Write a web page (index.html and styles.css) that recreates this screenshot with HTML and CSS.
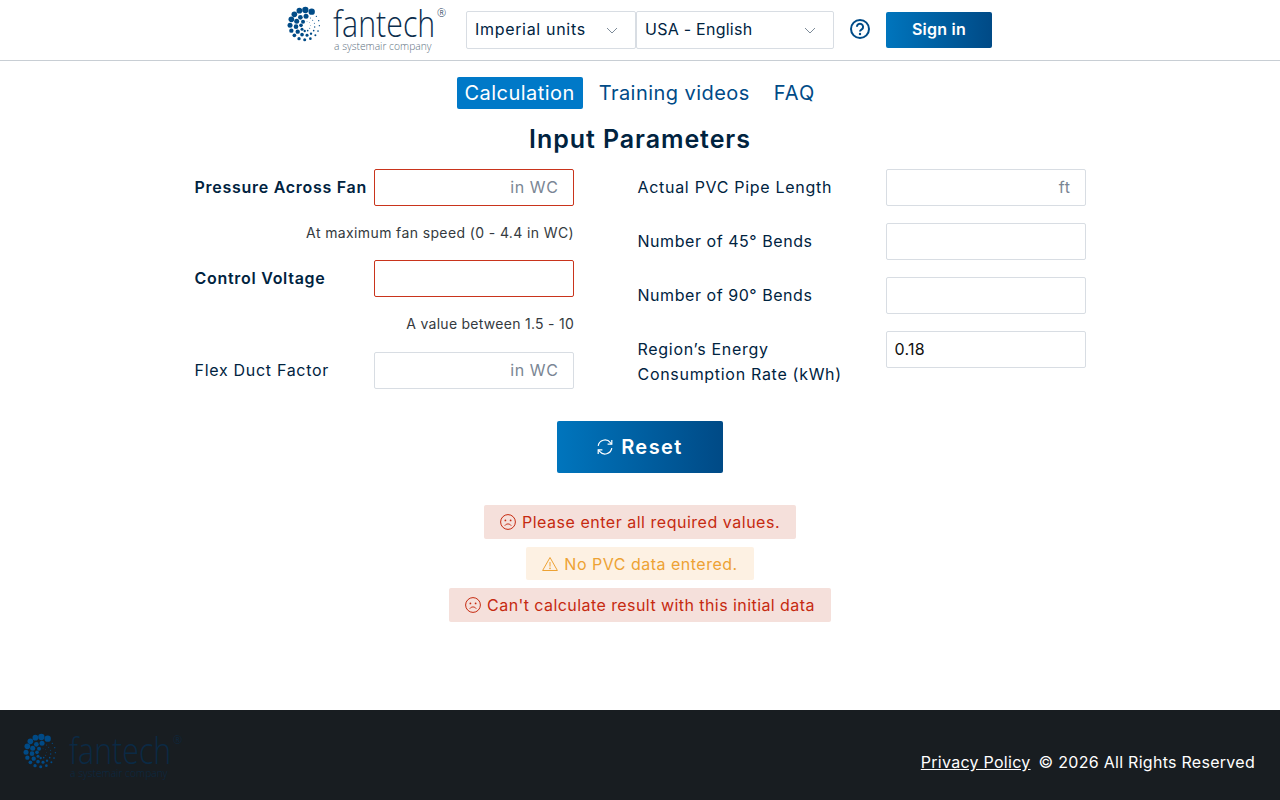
FILE: index.html
```html
<!DOCTYPE html>
<html lang="en">
<head>
<meta charset="utf-8">
<title>Fantech</title>
<link rel="stylesheet" href="styles.css">
</head>
<body>
<header class="topbar">
  <svg class="logo" width="158" height="46" viewBox="0 0 158 46">
    <g class="logo-dots" transform="translate(-24.3 -24) scale(.3333)">
      <circle cx="125" cy="81" r="9.5"/><circle cx="144" cy="86" r="9.5"/><circle cx="107" cy="83" r="8.5"/><circle cx="92" cy="94" r="8.5"/><circle cx="83" cy="109" r="8.5"/><circle cx="79" cy="127" r="7.5"/><circle cx="83" cy="143" r="6.5"/><circle cx="92" cy="157" r="5.5"/><circle cx="106" cy="167" r="5"/><circle cx="123" cy="170" r="4.5"/><circle cx="140" cy="167" r="4"/><circle cx="155" cy="157" r="3"/><circle cx="163" cy="144" r="2.5"/><circle cx="167" cy="128" r="2"/><circle cx="165" cy="113" r="2"/><circle cx="158" cy="100" r="2"/>
      <circle cx="127" cy="100" r="7.5"/><circle cx="110" cy="103" r="7"/><circle cx="99" cy="115" r="7.5"/><circle cx="97" cy="131" r="7"/><circle cx="102" cy="146" r="6.5"/><circle cx="115" cy="155" r="5.5"/><circle cx="130" cy="157" r="4.5"/><circle cx="142" cy="152" r="3.5"/><circle cx="150" cy="143" r="2.5"/><circle cx="153" cy="132" r="2"/><circle cx="152" cy="121" r="1.5"/><circle cx="147" cy="112" r="1.5"/><circle cx="140" cy="105" r="1.5"/>
      <circle cx="118" cy="116" r="6"/><circle cx="112" cy="127" r="5.5"/><circle cx="115" cy="139" r="4.5"/><circle cx="123" cy="144" r="3.5"/><circle cx="132" cy="143" r="2.5"/><circle cx="138" cy="136" r="1.5"/><circle cx="140" cy="127" r="1.2"/><circle cx="137" cy="119" r="1.2"/><circle cx="130" cy="115" r="1.2"/>
    </g>
    <text class="logo-name" transform="translate(45 30) scale(.82 1)">fantech</text>
    <text class="logo-reg" x="149" y="10">®</text>
    <text class="logo-sub" x="46" y="43">a systemair company</text>
  </svg>
  <div class="select select-units">
    <span>Imperial units</span>
    <svg class="chev" width="12" height="7" viewBox="0 0 12 7"><path d="M1 1l5 5 5-5"/></svg>
  </div>
  <div class="select select-region">
    <span>USA - English</span>
    <svg class="chev" width="12" height="7" viewBox="0 0 12 7"><path d="M1 1l5 5 5-5"/></svg>
  </div>
  <svg class="help" width="20" height="20" viewBox="0 0 20 20">
    <circle cx="10" cy="10" r="9"/>
    <path d="M6.9 7.8a3.1 3.1 0 1 1 4.8 2.6c-1.2.7-1.7 1.1-1.7 2.1"/>
    <circle class="help-dot" cx="10" cy="15" r="1.2"/>
  </svg>
  <a class="btn btn-signin" href="#">Sign in</a>
</header>

<main class="content">
  <nav class="tabs">
    <a class="tab tab-active" href="#">Calculation</a>
    <a class="tab" href="#">Training videos</a>
    <a class="tab tab-faq" href="#">FAQ</a>
  </nav>
  <h1 class="title">Input Parameters</h1>

  <form class="form">
    <div class="col col-left">
      <div class="row">
        <label class="label label-strong">Pressure Across Fan</label>
        <input class="input input-error" placeholder="in WC">
      </div>
      <p class="hint hint-long">At maximum fan speed (0 - 4.4 in WC)</p>
      <div class="row">
        <label class="label label-strong">Control Voltage</label>
        <input class="input input-error">
      </div>
      <p class="hint">A value between 1.5 - 10</p>
      <div class="row">
        <label class="label">Flex Duct Factor</label>
        <input class="input" placeholder="in WC">
      </div>
    </div>
    <div class="col col-right">
      <div class="row">
        <label class="label">Actual PVC Pipe Length</label>
        <input class="input" placeholder="ft">
      </div>
      <div class="row">
        <label class="label label-num">Number of 45° Bends</label>
        <input class="input">
      </div>
      <div class="row">
        <label class="label label-num">Number of 90° Bends</label>
        <input class="input">
      </div>
      <div class="row row-top">
        <label class="label label-wrap">Region’s Energy Consumption Rate (kWh)</label>
        <input class="input" value="0.18">
      </div>
    </div>
  </form>

  <a class="btn btn-reset" href="#">
    <svg class="reset-icon" width="16" height="16" viewBox="0 0 16 16">
      <path d="M1.2 6.8A6.9 6.9 0 0 1 13.4 3.6L14.6 5"/><path d="M14.8 1v4.2h-4.2"/>
      <path d="M14.8 9.2A6.9 6.9 0 0 1 2.6 12.4L1.4 11"/><path d="M1.2 15v-4.2h4.2"/>
    </svg>
    <span>Reset</span>
  </a>

  <div class="alerts">
    <div class="alert alert-error">
      <svg class="alert-icon" width="16" height="16" viewBox="0 0 16 16"><circle cx="8" cy="8" r="7.4"/><path d="M4.8 11.6c1.6-2.2 4.8-2.2 6.4 0"/><circle class="eye" cx="5.4" cy="6.4" r=".9"/><circle class="eye" cx="10.6" cy="6.4" r=".9"/></svg>
      <span>Please enter all required values.</span>
    </div>
    <div class="alert alert-warn">
      <svg class="alert-icon" width="16" height="16" viewBox="0 0 16 16"><path d="M8 1.5l7.4 13H.6z"/><path d="M8 6v4.6"/><circle class="eye" cx="8" cy="12.4" r=".8"/></svg>
      <span>No PVC data entered.</span>
    </div>
    <div class="alert alert-error alert-long">
      <svg class="alert-icon" width="16" height="16" viewBox="0 0 16 16"><circle cx="8" cy="8" r="7.4"/><path d="M4.8 11.6c1.6-2.2 4.8-2.2 6.4 0"/><circle class="eye" cx="5.4" cy="6.4" r=".9"/><circle class="eye" cx="10.6" cy="6.4" r=".9"/></svg>
      <span>Can't calculate result with this initial data</span>
    </div>
  </div>
</main>

<footer class="footer">
  <svg class="logo logo-dim" width="158" height="46" viewBox="0 0 158 46">
    <g class="logo-dots" transform="translate(-24.3 -24) scale(.3333)">
      <circle cx="125" cy="81" r="9.5"/><circle cx="144" cy="86" r="9.5"/><circle cx="107" cy="83" r="8.5"/><circle cx="92" cy="94" r="8.5"/><circle cx="83" cy="109" r="8.5"/><circle cx="79" cy="127" r="7.5"/><circle cx="83" cy="143" r="6.5"/><circle cx="92" cy="157" r="5.5"/><circle cx="106" cy="167" r="5"/><circle cx="123" cy="170" r="4.5"/><circle cx="140" cy="167" r="4"/><circle cx="155" cy="157" r="3"/><circle cx="163" cy="144" r="2.5"/><circle cx="167" cy="128" r="2"/><circle cx="165" cy="113" r="2"/><circle cx="158" cy="100" r="2"/>
      <circle cx="127" cy="100" r="7.5"/><circle cx="110" cy="103" r="7"/><circle cx="99" cy="115" r="7.5"/><circle cx="97" cy="131" r="7"/><circle cx="102" cy="146" r="6.5"/><circle cx="115" cy="155" r="5.5"/><circle cx="130" cy="157" r="4.5"/><circle cx="142" cy="152" r="3.5"/><circle cx="150" cy="143" r="2.5"/><circle cx="153" cy="132" r="2"/><circle cx="152" cy="121" r="1.5"/><circle cx="147" cy="112" r="1.5"/><circle cx="140" cy="105" r="1.5"/>
      <circle cx="118" cy="116" r="6"/><circle cx="112" cy="127" r="5.5"/><circle cx="115" cy="139" r="4.5"/><circle cx="123" cy="144" r="3.5"/><circle cx="132" cy="143" r="2.5"/><circle cx="138" cy="136" r="1.5"/><circle cx="140" cy="127" r="1.2"/><circle cx="137" cy="119" r="1.2"/><circle cx="130" cy="115" r="1.2"/>
    </g>
    <text class="logo-name" transform="translate(45 30) scale(.82 1)">fantech</text>
    <text class="logo-reg" x="149" y="10">®</text>
    <text class="logo-sub" x="46" y="43">a systemair company</text>
  </svg>
  <p class="legal"><a href="#">Privacy Policy</a><span>© 2026 All Rights Reserved</span></p>
</footer>
</body>
</html>
```
FILE: styles.css
```css
* { box-sizing: border-box; }
body {
  margin: 0;
  height: 800px;
  display: flex;
  flex-direction: column;
  overflow: hidden;
  background: #fff;
  color: #00233f;
  font-family: Inter, "Open Sans", "Liberation Sans", sans-serif;
  font-size: 16px;
  letter-spacing: .25px;
}
a { text-decoration: none; }

/* logo */
.logo { display: block; flex: none; overflow: visible; --sub: #5c6f80; --name: #0b2d4c; --dots: #004b87; }
.logo-dim { --sub: #0b2a45; --name: #0b2a45; --dots: #004a86; }
.logo-dots { fill: var(--dots); }
.logo-name { font: 300 37px "Open Sans", sans-serif; letter-spacing: 0; fill: var(--name); }
.logo-reg { font: 300 11px "Open Sans", sans-serif; letter-spacing: 0; fill: var(--name); }
.logo-sub { font: 300 10.3px "Open Sans", sans-serif; letter-spacing: 0; fill: var(--sub); }

/* header */
.topbar {
  flex: none;
  height: 61px;
  border-bottom: 1px solid #c8ced4;
  display: flex;
  align-items: center;
  justify-content: center;
}
.topbar .logo { margin-right: 20px; }
.select {
  height: 38px;
  border: 1px solid #d8dde3;
  border-radius: 2px;
  display: flex;
  align-items: center;
  justify-content: space-between;
  padding: 0 17px 2px 8px;
  color: #00233f;
}
.select-units { width: 170px; letter-spacing: .68px; }
.select-region { width: 198px; }
.chev { margin-top: 3px; }
.chev path { fill: none; stroke: #7d8b99; stroke-width: 1; }
.help { margin: 0 16px 2px; flex: none; }
.help circle { fill: none; stroke: #004b87; stroke-width: 2; }
.help path { fill: none; stroke: #004b87; stroke-width: 2; }
.help .help-dot { fill: #004b87; stroke: none; }
.btn {
  display: flex;
  align-items: center;
  justify-content: center;
  color: #fff;
  font-weight: 600;
  border-radius: 2px;
  background: linear-gradient(90deg, #0075bd, #004a86);
}
.btn-signin { width: 106px; height: 36px; padding-bottom: 2px; }

/* main */
.content {
  flex: 1;
  display: flex;
  flex-direction: column;
  align-items: center;
  padding-top: 16px;
}
.tabs { display: flex; gap: 8px; height: 32px; font-size: 20px; letter-spacing: .45px; }
.tab {
  display: flex;
  align-items: center;
  padding: 0 8px;
  color: #004b87;
  border-radius: 2px;
  font-weight: 400;
}
.tab-faq { letter-spacing: 1.1px; }
.tab-active { background: #0079c8; color: #fff; }
.title {
  margin: 13px 0 13px;
  font-size: 25px;
  line-height: 34px;
  font-weight: 600;
  letter-spacing: .93px;
  color: #00233f;
}
.form { display: flex; gap: 64px; height: 252px; letter-spacing: .7px; }
.col { display: flex; flex-direction: column; }
.col-left { width: 379px; }
.col-right { width: 448px; gap: 17px; }
.row { display: flex; align-items: center; justify-content: space-between; }
.row-top { align-items: flex-start; }
.label { display: block; line-height: 25px; }
.label-strong { font-weight: 600; letter-spacing: .72px; }
.label-num { letter-spacing: .55px; }
.label-wrap { width: 230px; margin-top: 6px; }
.input {
  width: 200px;
  height: 37px;
  flex: none;
  border: 1px solid #d8dde3;
  border-radius: 2px;
  padding: 0 8px 1px;
  font: inherit;
  letter-spacing: .3px;
  color: #111;
  background: #fff;
  outline: none;
}
.input::placeholder { color: #7a8694; opacity: 1; letter-spacing: .6px; }
.input[placeholder] { text-align: right; padding-right: 14px; }
.input-error { border-color: #c9341c; }
.hint {
  margin: 0 -.5px 0 0;
  height: 54.4px;
  padding-top: 17px;
  text-align: right;
  font-size: 14px;
  line-height: 20px;
  letter-spacing: .27px;
  color: #343a40;
}
.hint-long { letter-spacing: .38px; }
.btn-reset {
  width: 166px;
  height: 52px;
  gap: 8px;
  font-size: 20px;
  letter-spacing: 1.45px;
}
.reset-icon path { fill: none; stroke: #fff; stroke-width: 1.2; }

/* alerts */
.alerts { display: flex; flex-direction: column; align-items: center; gap: 8px; margin-top: 32px; letter-spacing: .52px; }
.alert {
  display: flex;
  align-items: center;
  gap: 6px;
  height: 34px;
  padding: 0 16px;
  border-radius: 2px;
}
.alert-icon { flex: none; }
.alert-icon path, .alert-icon circle { fill: none; stroke: currentColor; stroke-width: 1; }
.alert-icon .eye { fill: currentColor; stroke: none; }
.alert-error { background: #f5e0db; color: #c62a10; }
.alert-long { letter-spacing: .43px; }
.alert-warn { background: #fdf1e3; color: #eda234; height: 33px; letter-spacing: .5px; }

/* footer */
.footer {
  flex: none;
  height: 90px;
  background: #181d21;
  display: flex;
  justify-content: space-between;
  padding: 24px 25px 0 24px;
}
.legal { margin: 18px 0 0; line-height: 20px; color: #fff; display: flex; gap: 8px; letter-spacing: .28px; }
.legal a { color: #fff; text-decoration: underline; }
```
